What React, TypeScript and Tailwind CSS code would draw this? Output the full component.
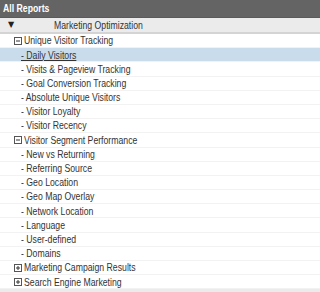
import React from "react";

type Row = { label: string; kind: "group" | "groupClosed" | "item"; active?: boolean };

const rows: Row[] = [
  { label: "Unique Visitor Tracking", kind: "group" },
  { label: "- Daily Visitors", kind: "item", active: true },
  { label: "- Visits & Pageview Tracking", kind: "item" },
  { label: "- Goal Conversion Tracking", kind: "item" },
  { label: "- Absolute Unique Visitors", kind: "item" },
  { label: "- Visitor Loyalty", kind: "item" },
  { label: "- Visitor Recency", kind: "item" },
  { label: "Visitor Segment Performance", kind: "group" },
  { label: "- New vs Returning", kind: "item" },
  { label: "- Referring Source", kind: "item" },
  { label: "- Geo Location", kind: "item" },
  { label: "- Geo Map Overlay", kind: "item" },
  { label: "- Network Location", kind: "item" },
  { label: "- Language", kind: "item" },
  { label: "- User-defined", kind: "item" },
  { label: "- Domains", kind: "item" },
  { label: "Marketing Campaign Results", kind: "groupClosed" },
  { label: "Search Engine Marketing", kind: "groupClosed" },
];

function Box({ open }: { open: boolean }) {
  return (
    <svg width="8" height="8" viewBox="0 0 8 8" className="shrink-0">
      <rect x="0.5" y="0.5" width="7" height="7" fill="#fff" stroke="#555" />
      <line x1="2" y1="4" x2="6" y2="4" stroke="#333" />
      {!open && <line x1="4" y1="2" x2="4" y2="6" stroke="#333" />}
    </svg>
  );
}

function T({ children, className = "" }: { children: React.ReactNode; className?: string }) {
  return (
    <span className={"inline-block whitespace-nowrap origin-left scale-x-[0.79] " + className}>{children}</span>
  );
}

export default function App() {
  return (
    <div
      className="w-[320px] h-[292px] overflow-hidden bg-white text-[11px] text-[#333]"
      style={{ fontFamily: '"Liberation Sans", Arial, sans-serif' }}
    >
      <div className="h-[18px] bg-[#646464] border-b border-[#5a5a5a] flex items-center pl-[3px] text-white font-bold text-[11px]">
        <T>All Reports</T>
      </div>
      <div className="h-[16px] bg-[#ebebeb] border-b-2 border-[#d4d4d4] flex items-center">
        <span className="w-[22px] pl-[8px] text-[8px] text-[#222]" style={{ fontFamily: '"DejaVu Sans", sans-serif' }}>▼</span>
        <span className="ml-[32px] text-[#333]"><T>Marketing Optimization</T></span>
      </div>
      <div className="flex flex-col">
        {rows.map((r, i) => (
          <div
            key={i}
            className={
              "h-[14.2px] flex items-center border-b border-[#f2f2f2] " +
              (r.active ? "bg-[#c9dcec]" : "bg-white")
            }
          >
            {r.kind === "item" ? (
              <span className="pl-[21px]">
                <T className={r.active ? "underline" : ""}>{r.label}</T>
              </span>
            ) : (
              <span className="pl-[14px] flex items-center gap-[2px]">
                <Box open={r.kind === "group"} />
                <T>{r.label}</T>
              </span>
            )}
          </div>
        ))}
      </div>
      <div className="h-[4px] bg-[#ebebeb]" />
    </div>
  );
}
